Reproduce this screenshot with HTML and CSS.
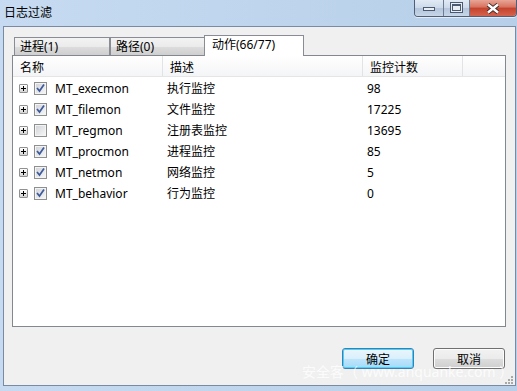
FILE: index.html
```html
<!DOCTYPE html>
<html>
<head>
	<title>日志过滤</title>
	<link rel="stylesheet" href="styles.css">
</head>
<body>
	<div class="window">
		<div class="titlebar">
			<span class="title">日志过滤</span>
			<div class="caption">
				<div class="cap min"><span class="glyph-min"></span></div>
				<div class="cap max"><span class="glyph-max"></span></div>
				<div class="cap close">
					<svg width="16" height="11" viewBox="0 0 16 11">
						<path d="M3 1.5 L13 9.5 M13 1.5 L3 9.5" stroke="#3a2a28" stroke-width="4.2" fill="none"/>
						<path d="M3 1.5 L13 9.5 M13 1.5 L3 9.5" stroke="#ffffff" stroke-width="2.4" fill="none"/>
					</svg>
				</div>
			</div>
		</div>
		<div class="client">
			<div class="tabs">
				<div class="tab first">进程(1)</div>
				<div class="tab">路径(0)</div>
				<div class="tab active">动作(66/77)</div>
			</div>
			<div class="list">
				<div class="header">
					<div class="col name">名称</div>
					<div class="col desc">描述</div>
					<div class="col count">监控计数</div>
				</div>
				<div class="rows">
					<div class="row">
						<div class="cell name"><span class="expand"></span><span class="check"><svg width="11" height="11" viewBox="0 0 11 11"><path d="M2 5 L4.5 8 L9 1.5" stroke="#3d5a9c" stroke-width="1.7" fill="none"/></svg></span>MT_execmon</div>
						<div class="cell desc">执行监控</div>
						<div class="cell count">98</div>
					</div>
					<div class="row">
						<div class="cell name"><span class="expand"></span><span class="check"><svg width="11" height="11" viewBox="0 0 11 11"><path d="M2 5 L4.5 8 L9 1.5" stroke="#3d5a9c" stroke-width="1.7" fill="none"/></svg></span>MT_filemon</div>
						<div class="cell desc">文件监控</div>
						<div class="cell count">17225</div>
					</div>
					<div class="row">
						<div class="cell name"><span class="expand"></span><span class="check"></span>MT_regmon</div>
						<div class="cell desc">注册表监控</div>
						<div class="cell count">13695</div>
					</div>
					<div class="row">
						<div class="cell name"><span class="expand"></span><span class="check"><svg width="11" height="11" viewBox="0 0 11 11"><path d="M2 5 L4.5 8 L9 1.5" stroke="#3d5a9c" stroke-width="1.7" fill="none"/></svg></span>MT_procmon</div>
						<div class="cell desc">进程监控</div>
						<div class="cell count">85</div>
					</div>
					<div class="row">
						<div class="cell name"><span class="expand"></span><span class="check"><svg width="11" height="11" viewBox="0 0 11 11"><path d="M2 5 L4.5 8 L9 1.5" stroke="#3d5a9c" stroke-width="1.7" fill="none"/></svg></span>MT_netmon</div>
						<div class="cell desc">网络监控</div>
						<div class="cell count">5</div>
					</div>
					<div class="row">
						<div class="cell name"><span class="expand"></span><span class="check"><svg width="11" height="11" viewBox="0 0 11 11"><path d="M2 5 L4.5 8 L9 1.5" stroke="#3d5a9c" stroke-width="1.7" fill="none"/></svg></span>MT_behavior</div>
						<div class="cell desc">行为监控</div>
						<div class="cell count">0</div>
					</div>
				</div>
			</div>
			<div class="buttons">
				<button type="button" class="btn default">确定</button>
				<button type="button" class="btn">取消</button>
			</div>
			<div class="watermark">安全客（ www.anquanke.com ）</div>
			<svg class="grip" width="9" height="9" viewBox="0 0 9 9">
				<rect x="6" y="0" width="2" height="2" fill="#a8a8a8"/>
				<rect x="3" y="3" width="2" height="2" fill="#a8a8a8"/>
				<rect x="6" y="3" width="2" height="2" fill="#a8a8a8"/>
				<rect x="0" y="6" width="2" height="2" fill="#a8a8a8"/>
				<rect x="3" y="6" width="2" height="2" fill="#a8a8a8"/>
				<rect x="6" y="6" width="2" height="2" fill="#a8a8a8"/>
			</svg>
		</div>
	</div>
</body>
</html>
```

FILE: styles.css
```css
body{
	margin: 0;
	font-family: "Noto Sans", "Noto Sans CJK SC", sans-serif;
	font-size: 12px;
	color: #000;
}
.window{
	width: 517px;
	height: 391px;
	box-sizing: border-box;
	padding: 0 1px 5px 3px;
	display: flex;
	flex-direction: column;
	background: linear-gradient(to right, #c6dbf1, #b7cfe9);
}
.titlebar{
	height: 26px;
	display: flex;
	justify-content: space-between;
	flex-shrink: 0;
}
.title{
	margin-left: 1px;
	line-height: 26px;
}
.caption{
	display: flex;
	height: 17px;
	margin-right: -1px;
	border: 1px solid #4f5f78;
	border-top: none;
	border-radius: 0 0 4px 4px;
	overflow: hidden;
	box-sizing: border-box;
	box-shadow: 0 1px 0 rgba(255,255,255,0.6);
}
.cap{
	display: flex;
	align-items: center;
	justify-content: center;
	height: 16px;
	box-sizing: border-box;
	background: linear-gradient(#e1eaf5, #cdd9e9 50%, #b4c5dc 51%, #c7d6e8);
	border-left: 1px solid #6d7c93;
}
.min{
	width: 28px;
	border-left: none;
	align-items: flex-end;
}
.max{
	width: 26px;
}
.close{
	width: 47px;
	background: linear-gradient(#e8a596, #d7725f 45%, #c5422c 50%, #d4644f);
}
.glyph-min{
	width: 10px;
	height: 2px;
	margin-bottom: 5px;
	background: #e9eef5;
	border: 1px solid #4c5a70;
}
.glyph-max{
	width: 7px;
	height: 4px;
	border: 1px solid #4c5a70;
	border-top-width: 2px;
	background: #e9eef5;
	box-shadow: 0 0 0 1px #e9eef5, 0 0 0 2px #4c5a70;
	margin-top: -2px;
}
.client{
	flex: 1;
	position: relative;
	display: flex;
	flex-direction: column;
	border: 1px solid #7a8aa3;
	background: #f0f0f0;
	padding: 8px 9px 0 8px;
}
.tabs{
	display: flex;
	align-items: flex-end;
	height: 21px;
	margin-bottom: -1px;
	position: relative;
	z-index: 1;
}
.tab{
	height: 18px;
	box-sizing: border-box;
	width: 95px;
	margin-bottom: 1px;
	padding: 0 0 0 5px;
	line-height: 17px;
	border: 1px solid #898c95;
	border-bottom: none;
	background: linear-gradient(#f3f3f3, #ebebeb 50%, #dddddd 51%, #cfcfcf);
}
.tab.first{
	width: 96px;
	margin-left: 2px;
}
.tab.active{
	height: 21px;
	width: 100px;
	margin: 0 0 0 -1px;
	padding: 1px 0 0 7px;
	line-height: 16px;
	background: #fff;
}
.list{
	height: 272px;
	box-sizing: border-box;
	border: 1px solid #828790;
	background: #fff;
}
.header{
	display: flex;
	height: 21px;
	box-sizing: border-box;
	border-bottom: 1px solid #e5e5e5;
	background: linear-gradient(#ffffff, #f4f5f7);
}
.col{
	box-sizing: border-box;
	padding: 4px 0 0 7px;
	line-height: 16px;
	border-right: 1px solid #e2e3e5;
}
.name{
	width: 150px;
}
.desc{
	width: 200px;
}
.count{
	width: 100px;
}
.rows{
	padding-top: 1px;
}
.row{
	display: flex;
	height: 21px;
	line-height: 21px;
}
.cell{
	box-sizing: border-box;
	padding-left: 4px;
}
.cell.name{
	display: flex;
	align-items: center;
	padding-left: 6px;
}
.expand{
	width: 9px;
	height: 9px;
	box-sizing: border-box;
	border: 1px solid #919191;
	border-radius: 1px;
	background: linear-gradient(#ffffff, #d4d4d4);
	position: relative;
	margin-right: 6px;
}
.expand::before{
	content: "";
	position: absolute;
	left: 1px;
	top: 3px;
	width: 5px;
	height: 1px;
	background: #000;
}
.expand::after{
	content: "";
	position: absolute;
	left: 3px;
	top: 1px;
	width: 1px;
	height: 5px;
	background: #000;
}
.check{
	width: 13px;
	height: 13px;
	box-sizing: border-box;
	border: 1px solid #8e8f8f;
	background: linear-gradient(135deg, #cfd2d6, #f8f8f8);
	box-shadow: inset 0 0 0 1px #f4f4f4;
	margin-right: 8px;
	display: flex;
	align-items: center;
	justify-content: center;
}
.buttons{
	display: flex;
	justify-content: flex-end;
	gap: 19px;
	margin: 21px 1px 0 0;
}
.btn{
	width: 72px;
	height: 21px;
	padding: 0;
	font-family: "Noto Sans", "Noto Sans CJK SC", sans-serif;
	font-size: 12px;
	color: #000;
	border: 1px solid #707070;
	border-radius: 3px;
	background: linear-gradient(#f2f2f2, #ebebeb 50%, #dddddd 51%, #cfcfcf);
	box-shadow: inset 0 0 0 1px #fcfcfc;
}
.btn.default{
	border-color: #3c7fb1;
	background: linear-gradient(#eaf6fd, #d9f0fc 50%, #bee6fd 51%, #a7d9f5);
	box-shadow: inset 0 0 0 1px #48d1fc;
}
.watermark{
	position: absolute;
	left: 298px;
	top: 336px;
	font-size: 14px;
	line-height: 18px;
	color: rgba(255,255,255,0.8);
	white-space: nowrap;
}
.grip{
	position: absolute;
	right: 1px;
	bottom: 0px;
}
```
